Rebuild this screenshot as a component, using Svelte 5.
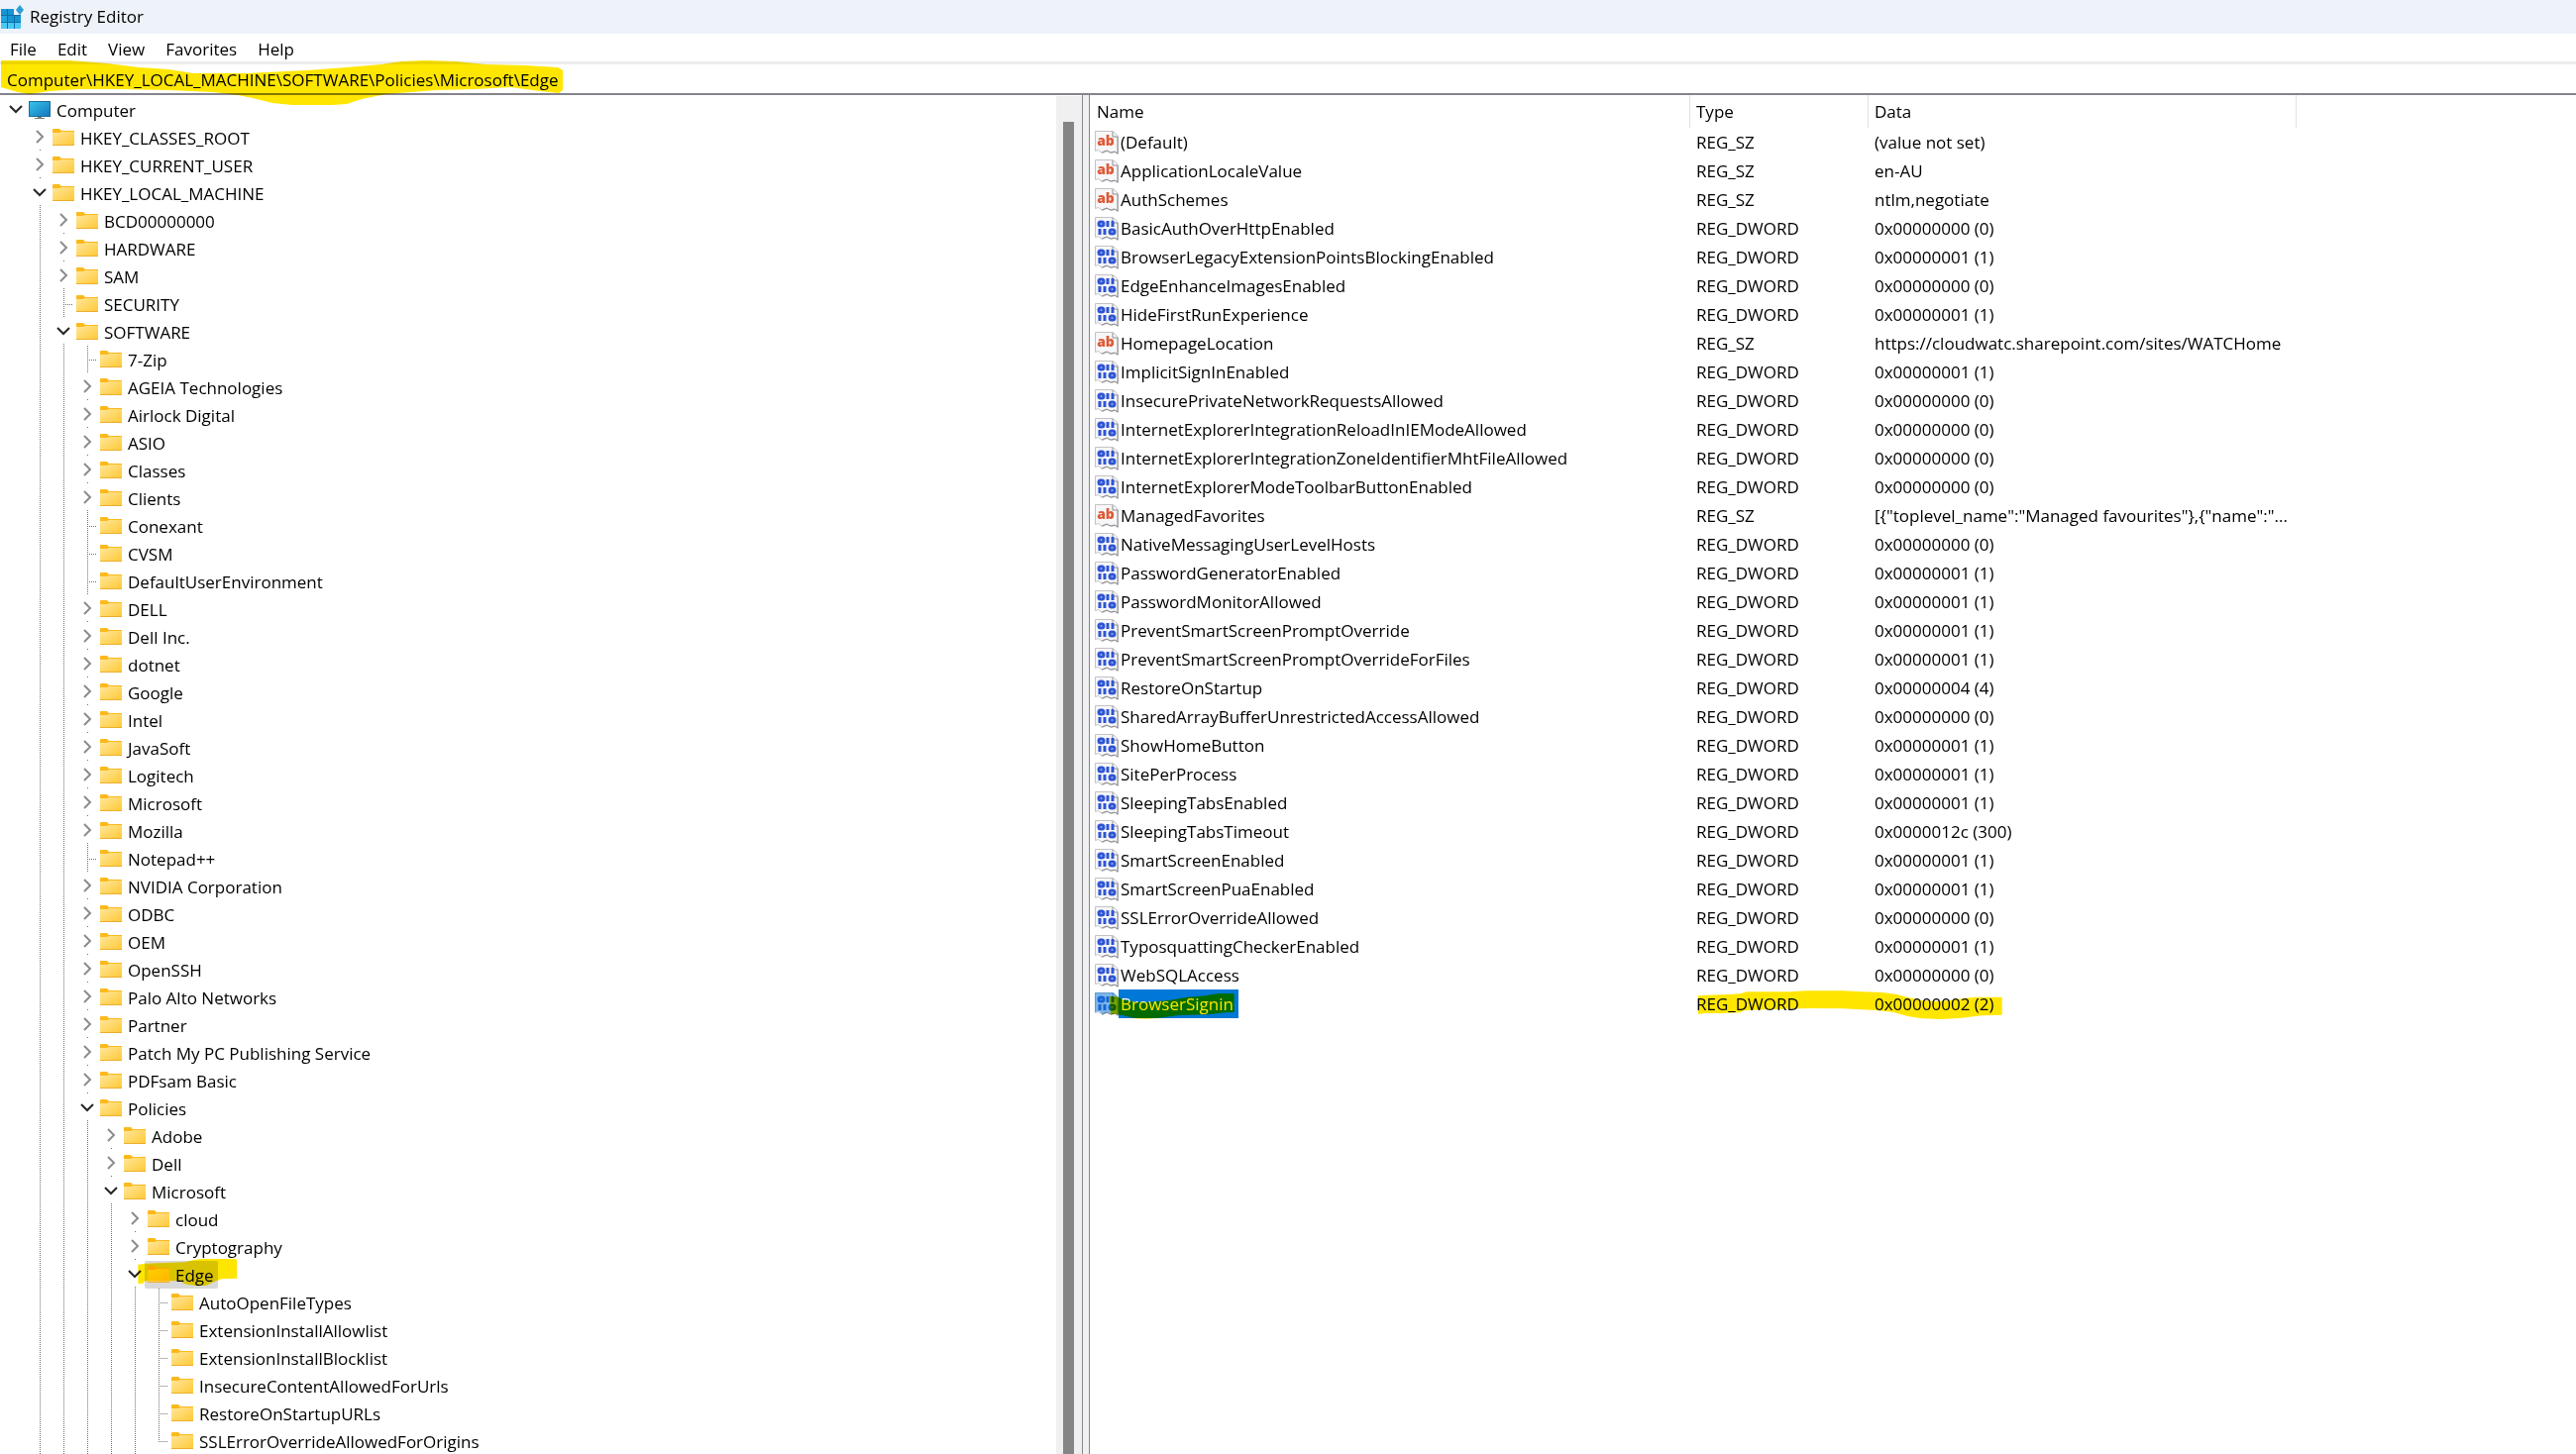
<script lang="ts">
    type Key = [level: number, name: string, state?: "open" | "leaf"];
    type Value = [name: string, data: string, type?: string];

    const menus = ["File", "Edit", "View", "Favorites", "Help"];
    const address = "Computer\\HKEY_LOCAL_MACHINE\\SOFTWARE\\Policies\\Microsoft\\Edge";
    const selectedKey = "Edge";
    const selectedValue = "BrowserSignin";

    const keys: Key[] = [
        [0, "Computer", "open"],
        [1, "HKEY_CLASSES_ROOT"],
        [1, "HKEY_CURRENT_USER"],
        [1, "HKEY_LOCAL_MACHINE", "open"],
        [2, "BCD00000000"],
        [2, "HARDWARE"],
        [2, "SAM"],
        [2, "SECURITY", "leaf"],
        [2, "SOFTWARE", "open"],
        [3, "7-Zip", "leaf"],
        [3, "AGEIA Technologies"],
        [3, "Airlock Digital"],
        [3, "ASIO"],
        [3, "Classes"],
        [3, "Clients"],
        [3, "Conexant", "leaf"],
        [3, "CVSM", "leaf"],
        [3, "DefaultUserEnvironment", "leaf"],
        [3, "DELL"],
        [3, "Dell Inc."],
        [3, "dotnet"],
        [3, "Google"],
        [3, "Intel"],
        [3, "JavaSoft"],
        [3, "Logitech"],
        [3, "Microsoft"],
        [3, "Mozilla"],
        [3, "Notepad++", "leaf"],
        [3, "NVIDIA Corporation"],
        [3, "ODBC"],
        [3, "OEM"],
        [3, "OpenSSH"],
        [3, "Palo Alto Networks"],
        [3, "Partner"],
        [3, "Patch My PC Publishing Service"],
        [3, "PDFsam Basic"],
        [3, "Policies", "open"],
        [4, "Adobe"],
        [4, "Dell"],
        [4, "Microsoft", "open"],
        [5, "cloud"],
        [5, "Cryptography"],
        [5, "Edge", "open"],
        [6, "AutoOpenFileTypes", "leaf"],
        [6, "ExtensionInstallAllowlist", "leaf"],
        [6, "ExtensionInstallBlocklist", "leaf"],
        [6, "InsecureContentAllowedForUrls", "leaf"],
        [6, "RestoreOnStartupURLs", "leaf"],
        [6, "SSLErrorOverrideAllowedForOrigins", "leaf"],
    ];

    const off = "0x00000000 (0)";
    const on = "0x00000001 (1)";
    const values: Value[] = [
        ["(Default)", "(value not set)", "REG_SZ"],
        ["ApplicationLocaleValue", "en-AU", "REG_SZ"],
        ["AuthSchemes", "ntlm,negotiate", "REG_SZ"],
        ["BasicAuthOverHttpEnabled", off],
        ["BrowserLegacyExtensionPointsBlockingEnabled", on],
        ["EdgeEnhanceImagesEnabled", off],
        ["HideFirstRunExperience", on],
        ["HomepageLocation", "https://cloudwatc.sharepoint.com/sites/WATCHome", "REG_SZ"],
        ["ImplicitSignInEnabled", on],
        ["InsecurePrivateNetworkRequestsAllowed", off],
        ["InternetExplorerIntegrationReloadInIEModeAllowed", off],
        ["InternetExplorerIntegrationZoneIdentifierMhtFileAllowed", off],
        ["InternetExplorerModeToolbarButtonEnabled", off],
        ["ManagedFavorites", '[{"toplevel_name":"Managed favourites"},{"name":"...', "REG_SZ"],
        ["NativeMessagingUserLevelHosts", off],
        ["PasswordGeneratorEnabled", on],
        ["PasswordMonitorAllowed", on],
        ["PreventSmartScreenPromptOverride", on],
        ["PreventSmartScreenPromptOverrideForFiles", on],
        ["RestoreOnStartup", "0x00000004 (4)"],
        ["SharedArrayBufferUnrestrictedAccessAllowed", off],
        ["ShowHomeButton", on],
        ["SitePerProcess", on],
        ["SleepingTabsEnabled", on],
        ["SleepingTabsTimeout", "0x0000012c (300)"],
        ["SmartScreenEnabled", on],
        ["SmartScreenPuaEnabled", on],
        ["SSLErrorOverrideAllowed", off],
        ["TyposquattingCheckerEnabled", on],
        ["WebSQLAccess", off],
        ["BrowserSignin", "0x00000002 (2)"],
    ];
</script>

<div class="window">
    <header class="title-bar">
        <svg class="app-icon" viewBox="0 0 24 28" aria-hidden="true">
            <path fill="#0c6fa8" d="M1 6h13v6h7v14H1z" />
            <path fill="#1795d3" d="M1 6h6v6H1zM8 6h6v6H8zM8 13h6v6H8zM15 13h6v6h-6z" />
            <path fill="#1fa5e0" d="M1 13h6v6H1z" />
            <path fill="#4cc8f4" d="M1 20h6v6H1zM8 20h6v6H8zM15 20h6v6h-6z" />
            <path fill="#2c9fd8" d="m20 2 4 5-4 5-4-5z" />
        </svg>
        <span>Registry Editor</span>
    </header>

    <nav class="menu-bar">
        {#each menus as menu}
            <button>{menu}</button>
        {/each}
    </nav>

    <div class="address-bar">
        <input aria-label="Address" value={address} />
        <svg class="marker address-marker" viewBox="0 60 572 48" aria-hidden="true">
            <path
                d="M1 61H70L108 64L140 68L170 70L195 74H250L310 71L350 68L385 65L405 62L430 61L460 62L490 65L530 66L563 68L568 71V91L564 94L545 92L515 88L480 90L440 91L390 95L365 100L350 105L335 106H295L275 104L255 99L240 96L215 93L170 91L120 90L80 90L50 92L30 95L18 93L1 88z"
            />
        </svg>
    </div>

    <main>
        <section class="tree-pane">
            <ul class="tree">
                {#each keys as [level, name, state], i}
                    <li>
                        {#each { length: level } as _, depth}
                            <span class="guide" class:line={depth > 0}></span>
                        {/each}
                        <span
                            class="joint"
                            class:line={level > 0}
                            class:leaf={state === "leaf"}
                            class:last={i === keys.length - 1}
                        >
                            {#if state !== "leaf"}
                                <button class="expander" class:open={state === "open"} aria-label="Toggle {name}">
                                    <svg viewBox="0 0 14 14" aria-hidden="true">
                                        <path d={state === "open" ? "M1 4l6 6 6-6" : "M4 1l6 6-6 6"} />
                                    </svg>
                                </button>
                            {/if}
                        </span>
                        <span class="key" class:selected={name === selectedKey}>
                            {#if level === 0}
                                <svg class="key-icon" viewBox="0 0 22 20" aria-hidden="true">
                                    <defs>
                                        <linearGradient id="screen" x2="1" y2="1">
                                            <stop offset="0" stop-color="#35c4e8" />
                                            <stop offset="1" stop-color="#1477c0" />
                                        </linearGradient>
                                    </defs>
                                    <path fill="#777d82" d="M9 15h4v2h3v1H6v-1h3z" />
                                    <path fill="#1d6d94" d="M0 0h22v16H0z" />
                                    <path fill="url(#screen)" d="M1 1h20v14H1z" />
                                </svg>
                            {:else}
                                <svg class="key-icon" viewBox="0 1 22 20" aria-hidden="true">
                                    <defs>
                                        <linearGradient id="folder" x2="1" y2="1">
                                            <stop offset="0" stop-color="#ffe69b" />
                                            <stop offset="1" stop-color="#ffc934" />
                                        </linearGradient>
                                    </defs>
                                    <path fill="#fbb91c" d="M0 2q0-1 1-1h6l2 2h13v3H0z" />
                                    <path fill="url(#folder)" d="M0 5h7l2-1h13v14H0z" />
                                    <path fill="#eeae2d" d="M0 17h22v1H0z" />
                                </svg>
                            {/if}
                            {name}
                            {#if name === selectedKey}
                                <svg class="marker key-marker" viewBox="417 570 303 87" aria-hidden="true">
                                    <path
                                        d="M418 590L440 587L500 585L560 583L585 577L610 573H714L717 576V632L670 634L650 642L625 653L600 655L570 651L548 645L565 640H440L435 645L433 648H418z"
                                    />
                                </svg>
                            {/if}
                        </span>
                    </li>
                {/each}
            </ul>
            <div class="scrollbar"><div class="thumb"></div></div>
        </section>

        <section class="value-pane">
            <table>
                <colgroup>
                    <col class="name-col" />
                    <col class="type-col" />
                    <col class="data-col" />
                    <col />
                </colgroup>
                <thead>
                    <tr>
                        <th>Name</th>
                        <th>Type</th>
                        <th>Data</th>
                        <td></td>
                    </tr>
                </thead>
                <tbody>
                    {#each values as [name, data, type = "REG_DWORD"]}
                        <tr class:selected={name === selectedValue}>
                            <td>
                                <div class="value">
                                    <svg class="value-icon" viewBox="0 0 24 24" aria-hidden="true">
                                        <path
                                            fill="#f7f7f9"
                                            stroke="#c3c3c6"
                                            d="M.5.5h18l5 5v18l-3-2-4 1-4-2-5 2-4-3-3 1z"
                                        />
                                        <path fill="none" stroke="#8b8b8e" d="M18 1v5h5M23 6v17l-3-2-4 1-4-2-5 2" />
                                        {#if type === "REG_SZ"}
                                            <text x="11" y="15" class="glyph-text">ab</text>
                                        {:else}
                                            <g fill="none" stroke="#2f55d4" stroke-width="3">
                                                <rect x="4" y="5" width="5" height="4" rx="2" />
                                                <path d="M13 4v6M18 4v6M5 12v6M10 12v6" />
                                                <rect x="15" y="13" width="5" height="4" rx="2" />
                                            </g>
                                        {/if}
                                        {#if name === selectedValue}
                                            <path fill="#0078d7" opacity="0.5" d="M0 0h19l5 5v18l-3-2-4 1-4-2-5 2-4-3-4 1z" />
                                        {/if}
                                    </svg>
                                    <span class="value-name">
                                        {name}
                                        {#if name === selectedValue}
                                            <svg class="marker name-marker" viewBox="90 120 378 84" aria-hidden="true">
                                                <path
                                                    d="M90 135H112L130 145L170 152H210L270 147L320 138L380 133L400 129L420 126H467V183L440 184L390 190L300 192L240 200L200 203L170 202L130 193L110 188L93 190z"
                                                />
                                            </svg>
                                        {/if}
                                    </span>
                                </div>
                            </td>
                            <td>
                                {type}
                                {#if name === selectedValue}
                                    <svg class="marker data-marker" viewBox="102 114 921 90" aria-hidden="true">
                                        <path
                                            d="M102 133L130 131L190 129L230 127L250 121H380L430 118H540L600 121L660 123L700 128L740 139L780 147L820 150L860 148L900 142L940 137H1022V191L960 193L900 200L840 204L780 202L740 196L690 182L640 177L540 172L440 171L300 175L240 178L230 184L170 186H120L102 189z"
                                        />
                                    </svg>
                                {/if}
                            </td>
                            <td>{data}</td>
                            <td></td>
                        </tr>
                    {/each}
                </tbody>
            </table>
        </section>
    </main>
</div>

<style>
    :global(body) {
        margin: 0;
    }

    .window {
        display: flex;
        flex-direction: column;
        height: 100vh;
        overflow: hidden;
        background-color: #fff;
        color: #000;
        font-family: "Open Sans", "Noto Sans", sans-serif;
        font-size: 17px;
        line-height: 28px;
    }

    button,
    input {
        border: none;
        padding: 0;
        background: none;
        color: inherit;
        font: inherit;
    }

    .title-bar {
        display: flex;
        align-items: center;
        gap: 6px;
        height: 34px;
        flex-shrink: 0;
        background-color: #eef2f9;
    }

    .app-icon {
        width: 24px;
        height: 28px;
    }

    .menu-bar {
        display: flex;
        gap: 21px;
        padding: 3px 10px 0;
        height: 25px;
        flex-shrink: 0;
        line-height: 25px;
        border-bottom: 3px solid #ececec;
    }

    .address-bar {
        position: relative;
        flex-shrink: 0;
        height: 29px;
        border-bottom: 2px solid #85838c;
    }

    .address-bar input {
        display: block;
        box-sizing: border-box;
        width: 100%;
        height: 29px;
        padding: 2px 0 0 7px;
        outline: none;
    }

    /* highlighter strokes lie over the text like ink */
    .marker {
        position: absolute;
        z-index: 1;
        fill: #ffe600;
        mix-blend-mode: multiply;
        pointer-events: none;
    }

    .address-marker {
        left: 0;
        top: -5px;
        width: 572px;
        height: 48px;
    }

    main {
        display: flex;
        flex: 1;
        min-height: 0;
    }

    .tree-pane {
        display: flex;
        box-sizing: border-box;
        width: 42%;
        padding-top: 1px;
        overflow: hidden;
    }

    .tree {
        flex: 1;
        margin: 0;
        padding: 0 0 0 4px;
        list-style: none;
    }

    .tree li {
        display: flex;
        height: 28px;
        white-space: nowrap;
    }

    .guide {
        width: 24px;
    }

    .joint {
        position: relative;
        width: 22px;
    }

    .line {
        background: repeating-linear-gradient(#707070 0 1px, transparent 1px 2px) 12px 0 / 1px 100% no-repeat;
    }

    .line.last {
        background-size: 1px 14px;
    }

    .leaf::after {
        content: "";
        display: block;
        height: 1px;
        margin: 14px 0 0 12px;
        background: repeating-linear-gradient(90deg, #707070 0 1px, transparent 1px 2px);
    }

    .expander {
        display: flex;
        align-items: center;
        justify-content: center;
        width: 23px;
        height: 25px;
        background-color: #fff;
    }

    .expander svg {
        width: 14px;
        height: 14px;
        fill: none;
        stroke: #8c8c8c;
        stroke-width: 2;
    }

    .expander.open svg {
        stroke: #262626;
    }

    .key {
        position: relative;
        display: flex;
        align-items: center;
        box-sizing: border-box;
        height: 28px;
        gap: 6px;
        padding: 2px 4px 0 3px;
        line-height: 26px;
    }

    .key.selected {
        background-color: #d9d9d9;
        border-radius: 2px;
    }

    .key-icon {
        width: 22px;
        height: 20px;
    }

    .key-marker {
        left: -7px;
        top: -3px;
        width: 101px;
        height: 29px;
    }

    .scrollbar {
        width: 26px;
        background-color: #f0f0f0;
    }

    .thumb {
        width: 11px;
        height: 100%;
        margin: 26px 0 0 7px;
        background-color: #858585;
    }

    .value-pane {
        flex: 1;
        min-width: 0;
        border-left: 1px solid #828790;
        box-shadow: inset 6px 0 #f0f0f0, inset 7px 0 #828790;
        padding-left: 7px;
    }

    table {
        width: 100%;
        table-layout: fixed;
        border-collapse: separate;
        border-spacing: 0;
    }

    .name-col {
        width: 606px;
    }

    .type-col {
        width: 180px;
    }

    .data-col {
        width: 432px;
    }

    th,
    td {
        position: relative;
        height: 29px;
        padding: 0 0 0 6px;
        line-height: 29px;
        text-align: left;
        font-weight: 400;
        white-space: nowrap;
    }

    th {
        height: 33px;
        border-right: 1px solid #e2e2e2;
    }

    th:first-child {
        padding-left: 7px;
    }

    tbody td:first-child {
        padding-left: 5px;
    }

    .value {
        display: flex;
        align-items: center;
    }

    .value-icon {
        width: 24px;
        height: 24px;
        overflow: visible;
    }

    .glyph-text {
        fill: #de5a38;
        font-size: 14px;
        font-weight: 800;
        line-height: 16px;
        text-anchor: middle;
    }

    .value-name {
        position: relative;
        padding: 0 5px 0 2px;
    }

    .selected .value-name {
        background-color: #0078d7;
        color: #fff;
    }

    .name-marker {
        left: -9px;
        top: 2px;
        width: 126px;
        height: 28px;
    }

    .data-marker {
        left: 8px;
        top: 0;
        width: 307px;
        height: 30px;
    }
</style>
